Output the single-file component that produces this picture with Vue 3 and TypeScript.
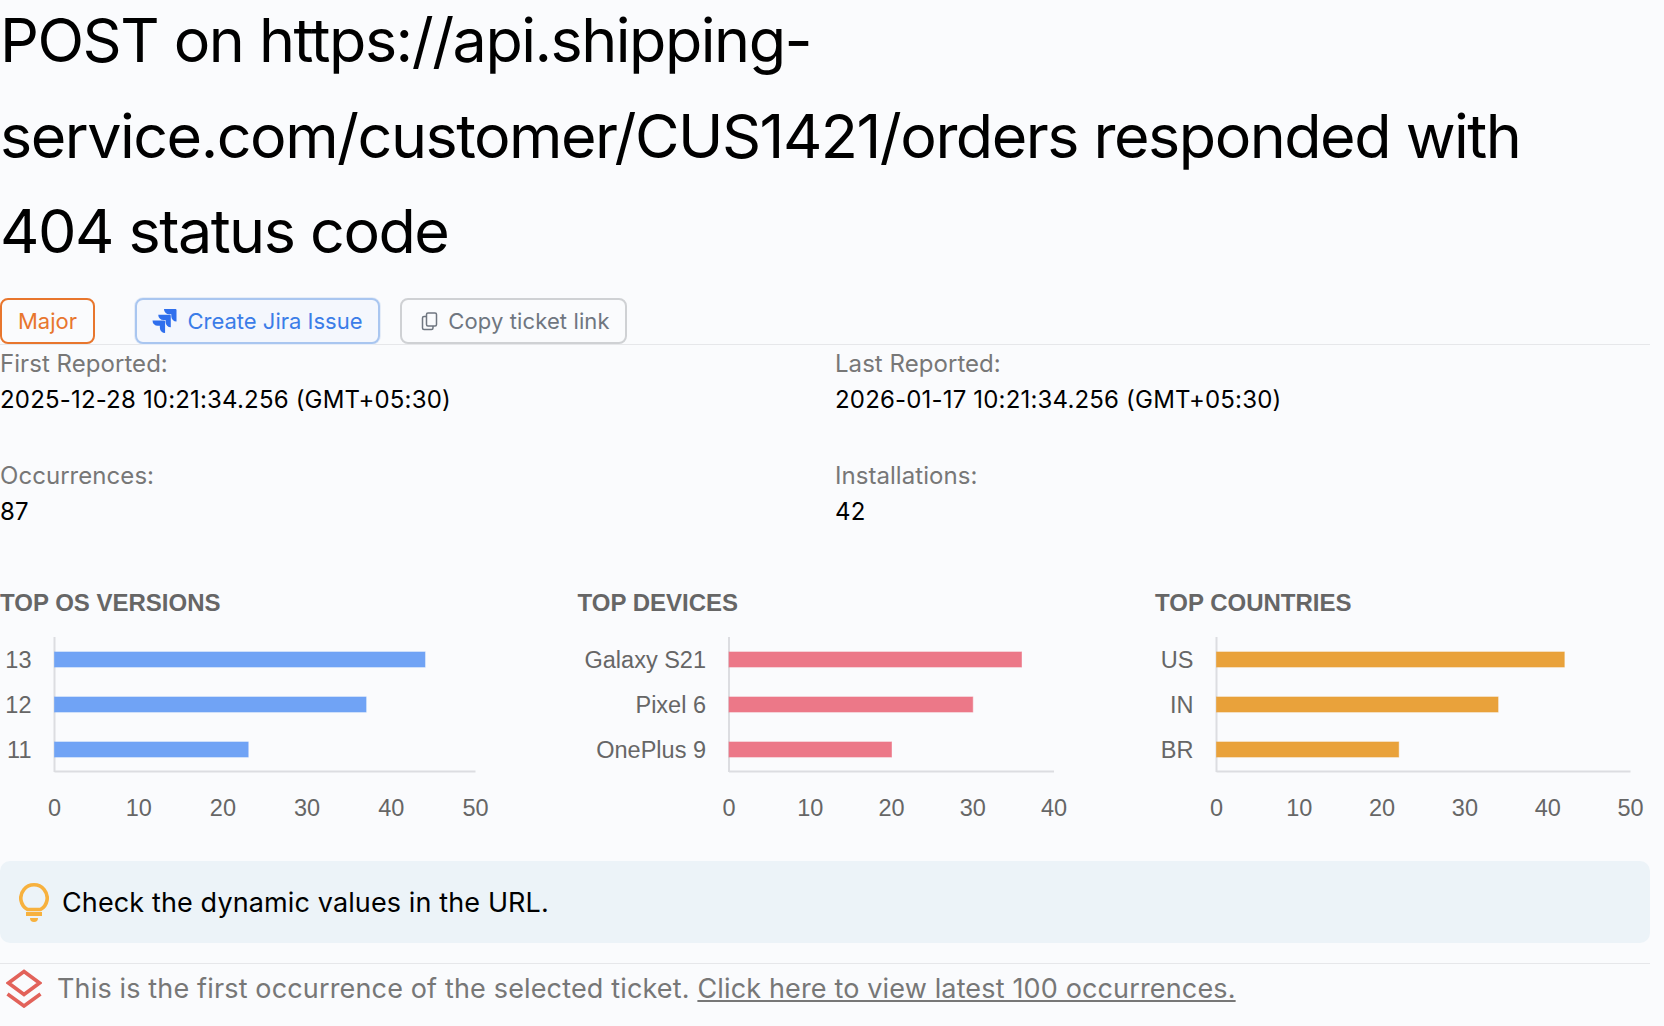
<script setup lang="ts">
interface Chart {
  title: string;
  color: string;
  originX: number;
  plotWidth: number;
  max: number;
  ticks: number[];
  rows: { label: string; value: number }[];
}

const charts: Chart[] = [
  {
    title: 'TOP OS VERSIONS',
    color: '#70a3f5',
    originX: 54.5,
    plotWidth: 421,
    max: 50,
    ticks: [0, 10, 20, 30, 40, 50],
    rows: [
      { label: '13', value: 44 },
      { label: '12', value: 37 },
      { label: '11', value: 23 },
    ],
  },
  {
    title: 'TOP DEVICES',
    color: '#ec7888',
    originX: 151,
    plotWidth: 325,
    max: 40,
    ticks: [0, 10, 20, 30, 40],
    rows: [
      { label: 'Galaxy S21', value: 36 },
      { label: 'Pixel 6', value: 30 },
      { label: 'OnePlus 9', value: 20 },
    ],
  },
  {
    title: 'TOP COUNTRIES',
    color: '#e9a23b',
    originX: 61.5,
    plotWidth: 414,
    max: 50,
    ticks: [0, 10, 20, 30, 40, 50],
    rows: [
      { label: 'US', value: 42 },
      { label: 'IN', value: 34 },
      { label: 'BR', value: 22 },
    ],
  },
];

const rowY = [22.5, 67.5, 112.5];

function scale(c: Chart, v: number) {
  return (v / c.max) * c.plotWidth;
}
</script>

<template>
  <div class="page">
    <h1 class="title">POST on https://api.shipping-service.com/customer/CUS1421/orders responded with 404 status code</h1>

    <div class="actions">
      <span class="badge">Major</span>
      <button class="btn jira" type="button">
        <svg width="25" height="24" viewBox="0 0 24 24" fill="#2f6fed">
          <path d="M11.571 11.513H0a5.218 5.218 0 0 0 5.232 5.215h2.13v2.057A5.215 5.215 0 0 0 12.575 24V12.518a1.005 1.005 0 0 0-1.005-1.005zm5.723-5.756H5.736a5.215 5.215 0 0 0 5.215 5.214h2.129v2.058a5.218 5.218 0 0 0 5.215 5.214V6.758a1.001 1.001 0 0 0-1.001-1.001zM23.013 0H11.455a5.215 5.215 0 0 0 5.215 5.215h2.129v2.057A5.215 5.215 0 0 0 24 12.483V1.005A1.001 1.001 0 0 0 23.013 0Z" />
        </svg>
        Create Jira Issue
      </button>
      <button class="btn copy" type="button">
        <svg width="17" height="19" viewBox="0 0 17 19" fill="none" stroke="#6f7680" stroke-width="1.5">
          <rect x="5.5" y="1" width="10" height="13" rx="1.5" />
          <path d="M5.5 4.5H3A1.5 1.5 0 0 0 1.5 6v10A1.5 1.5 0 0 0 3 17.5h7.5a1.5 1.5 0 0 0 1.5-1.5v-2" />
        </svg>
        Copy ticket link
      </button>
    </div>

    <div class="meta">
      <div class="meta-item">
        <div class="meta-label">First Reported:</div>
        <div class="meta-value">2025-12-28 10:21:34.256 (GMT+05:30)</div>
      </div>
      <div class="meta-item">
        <div class="meta-label">Last Reported:</div>
        <div class="meta-value">2026-01-17 10:21:34.256 (GMT+05:30)</div>
      </div>
      <div class="meta-item">
        <div class="meta-label">Occurrences:</div>
        <div class="meta-value">87</div>
      </div>
      <div class="meta-item">
        <div class="meta-label">Installations:</div>
        <div class="meta-value">42</div>
      </div>
    </div>

    <div class="charts">
      <section v-for="c in charts" :key="c.title" class="chart">
        <h2 class="chart-title">{{ c.title }}</h2>
        <svg class="chart-svg" width="509" height="200">
          <line :x1="c.originX" y1="0" :x2="c.originX" y2="135" stroke="#dcdde1" stroke-width="2" />
          <line :x1="c.originX" y1="134.5" :x2="c.originX + c.plotWidth" y2="134.5" stroke="#dcdde1" stroke-width="2" />
          <g v-for="(r, i) in c.rows" :key="r.label">
            <rect
              :x="c.originX"
              :y="rowY[i] - 7.5"
              :width="scale(c, r.value)"
              height="15"
              :fill="c.color"
              :stroke="c.color"
              stroke-opacity="0.6"
            />
            <text :x="c.originX - 23" :y="rowY[i] + 8.5" text-anchor="end" class="axis-text">{{ r.label }}</text>
          </g>
          <text
            v-for="t in c.ticks"
            :key="t"
            :x="c.originX + scale(c, t)"
            y="179"
            text-anchor="middle"
            class="axis-text"
          >{{ t }}</text>
        </svg>
      </section>
    </div>

    <div class="tip">
      <svg width="30" height="40" viewBox="0 0 30 40" fill="none">
        <path d="M8.5 27.5A13.2 13.2 0 1 1 21.5 27.5H8.5Z" stroke="#f7b13e" stroke-width="3.6" stroke-linejoin="round" />
        <rect x="7" y="30" width="16" height="4" fill="#f7b13e" />
        <path d="M11 36h8a4 4 0 0 1-8 0Z" fill="#f7b13e" />
      </svg>
      <span>Check the dynamic values in the URL.</span>
    </div>

    <div class="footer">
      <svg width="36" height="40" viewBox="0 0 36 40" fill="none" stroke="#e2625a" stroke-width="3.6">
        <path d="M18 3.5 33.5 15 18 26.5 2.5 15Z" />
        <path d="M1.5 26 18 38 34.5 26" />
      </svg>
      <span class="footer-text">This is the first occurrence of the selected ticket. <a href="#" class="footer-link">Click here to view latest 100 occurrences.</a></span>
    </div>
  </div>
</template>

<style>
html,
body {
  background: #fafbfd;
}
</style>

<style scoped>
.page {
  width: 1650px;
  height: 1026px;
  overflow: hidden;
  background: #fafbfd;
  font-family: Inter, "Liberation Sans", sans-serif;
  color: #000;
}
.title {
  margin: -7px 0 0;
  padding-right: 30px;
  font-size: 61px;
  font-weight: 400;
  line-height: 95.5px;
  letter-spacing: -1.5px;
}
.actions {
  display: flex;
  align-items: stretch;
  height: 47px;
  margin-top: 18.5px;
  border-bottom: 1px solid #e6e7ea;
  box-sizing: border-box;
}
.badge {
  display: flex;
  align-items: center;
  width: 95px;
  justify-content: center;
  box-sizing: border-box;
  border: 2px solid #e8762d;
  border-radius: 8px;
  color: #e8762d;
  font-size: 22px;
}
.btn {
  display: flex;
  align-items: center;
  justify-content: center;
  gap: 10px;
  box-sizing: border-box;
  border-radius: 8px;
  font: inherit;
  font-size: 22px;
  background: transparent;
  padding: 0;
}
.jira {
  width: 245px;
  margin-left: 40px;
  color: #3b7de8;
  background: #f4f7fd;
  border: 2px solid #a9c6f0;
  box-shadow: 0 0 0 1px #e6edf8;
}
.copy {
  width: 227px;
  margin-left: 20px;
  padding-left: 4px;
  color: #6f7680;
  border: 2px solid #cfd1d4;
  letter-spacing: 0.12px;
}
.meta {
  display: grid;
  grid-template-columns: 1fr 1fr;
  column-gap: 20px;
  row-gap: 40px;
  margin-top: 1px;
  font-size: 24px;
}
.meta-label {
  line-height: 36px;
  color: #777;
  letter-spacing: 0.05px;
}
.meta-value {
  line-height: 36px;
  letter-spacing: 0.18px;
}
.charts {
  display: grid;
  grid-template-columns: repeat(3, 577.5px);
  margin-top: 56px;
  width: 1664px;
}
.chart-title {
  margin: 0;
  font-family: "Liberation Sans", Arial, sans-serif;
  font-size: 24px;
  font-weight: 700;
  line-height: 34px;
  color: #666;
}
.chart-svg {
  display: block;
  margin-top: 17px;
}
.axis-text {
  font-family: "Liberation Sans", Arial, sans-serif;
  font-size: 23.5px;
  fill: #666;
}
.tip {
  display: flex;
  align-items: center;
  gap: 13px;
  height: 82px;
  margin-top: 24px;
  padding-left: 19px;
  box-sizing: border-box;
  background: #ecf3f8;
  border-radius: 10px;
  font-size: 27px;
  letter-spacing: 0.12px;
}
.footer {
  display: flex;
  align-items: center;
  gap: 15px;
  margin-top: 20px;
  padding: 4px 0 0 6px;
  border-top: 1px solid #e6e7ea;
  font-size: 27px;
  letter-spacing: 0.15px;
  color: #777;
}
.footer-link {
  color: #777;
  text-decoration: underline;
}
</style>
